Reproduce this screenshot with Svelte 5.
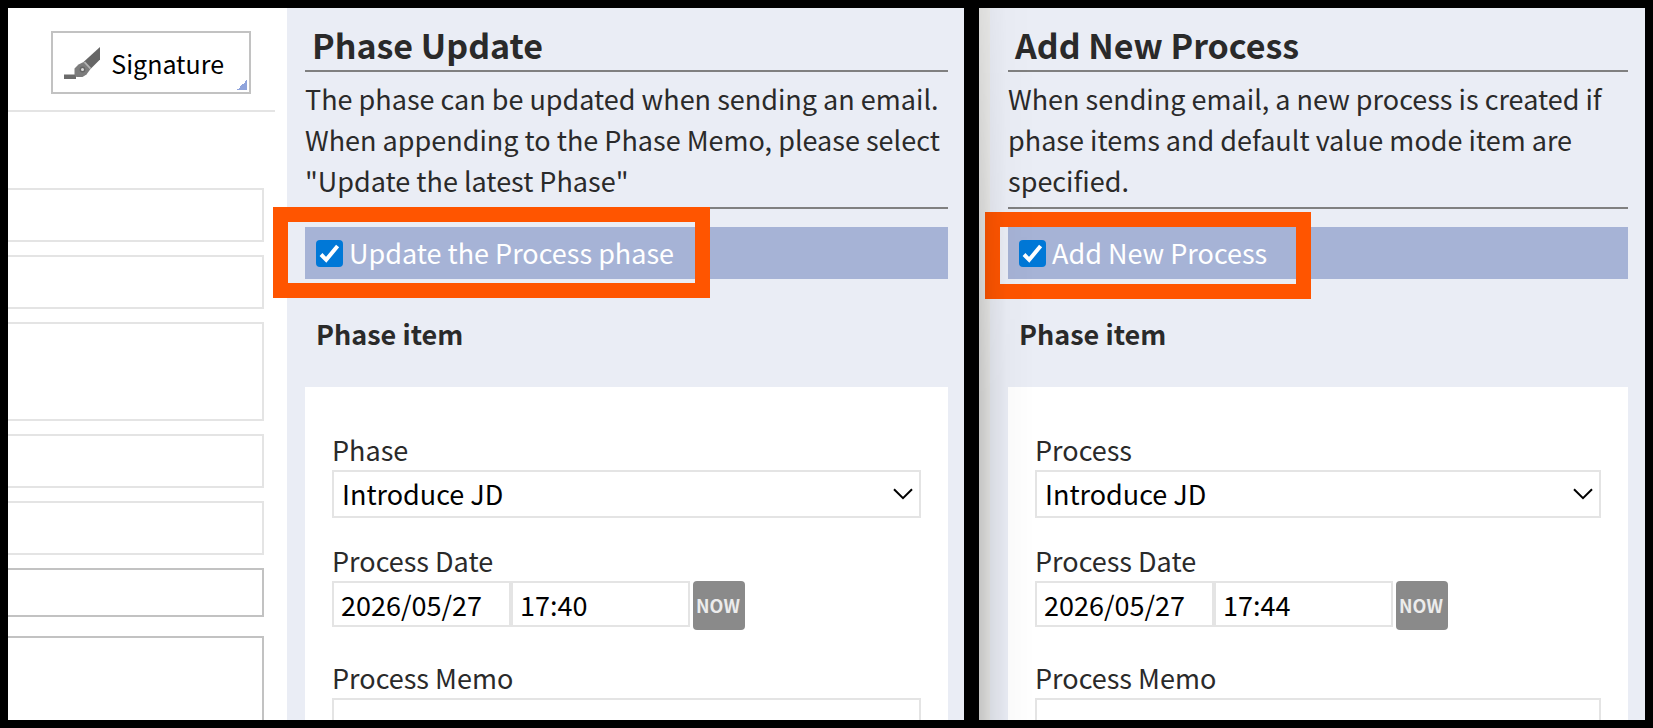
<script>
  const composeFields = ['To', 'Cc', 'Bcc', 'Reply to', 'Sender'];

  const panels = [
    {
      id: 'update',
      title: 'Phase Update',
      text: 'The phase can be updated when sending an email. When appending to the Phase Memo, please select "Update the latest Phase"',
      toggle: 'Update the Process phase',
      selectLabel: 'Phase',
      time: '17:40'
    },
    {
      id: 'create',
      title: 'Add New Process',
      text: 'When sending email, a new process is created if phase items and default value mode item are specified.',
      toggle: 'Add New Process',
      selectLabel: 'Process',
      time: '17:44'
    }
  ];
</script>

{#snippet sidebar(p)}
  <section class="sidebar">
    <h2>{p.title}</h2>
    <p class="intro">{p.text}</p>
    <div class="bar">
      <label class="toggle">
        <span class="check">
          <input type="checkbox" checked />
          <svg viewBox="0 0 27 27" aria-hidden="true"><path d="M5 14.5l5.2 5.3L21.6 6" fill="none" stroke="#fff" stroke-width="4" /></svg>
        </span>
        {p.toggle}
      </label>
      <span class="highlight {p.id}"></span>
    </div>
    <h3>Phase item</h3>
    <div class="card">
      <div class="field">
        <label for="{p.id}-phase">{p.selectLabel}</label>
        <div class="select">
          <select id="{p.id}-phase"><option>Introduce JD</option></select>
          <svg viewBox="0 0 20 12" aria-hidden="true"><path d="M1 1.2l9 9 9-9" fill="none" stroke="#000" stroke-width="2" /></svg>
        </div>
      </div>
      <div class="field date">
        <label for="{p.id}-date">Process Date</label>
        <div class="row">
          <input id="{p.id}-date" type="text" value="2026/05/27" />
          <input type="text" aria-label="Process time" value={p.time} />
          <button type="button" class="now">NOW</button>
        </div>
      </div>
      <div class="field memo">
        <label for="{p.id}-memo">Process Memo</label>
        <textarea id="{p.id}-memo"></textarea>
      </div>
    </div>
  </section>
{/snippet}

<main>
  <div class="frame wide">
    <section class="compose">
      <div class="tools">
        <button type="button" class="signature">
          <svg viewBox="0 0 36 32" aria-hidden="true">
            <path d="M0 27.5h12v4.5H0z" fill="#6b6b6b" />
            <path d="M36 0v12.500L26.500 22 19.500 15z" fill="#666" />
            <path d="M19.500 15l7 7-4 5.500-4 2.500h-6l-2-2v-6.500l4-4z" fill="#7c7c7c" />
            <path d="M20.500 15l6 6.500" stroke="#b4b4b4" stroke-width="1.800" />
            <circle cx="18.500" cy="22.500" r="2.200" fill="#dcdcdc" stroke="#666" stroke-width="1.400" />
          </svg>
          Signature
        </button>
      </div>
      <div class="inputs">
        {#each composeFields as name, i}
          <input type="text" aria-label={name} class:tall={i === 2} />
        {/each}
        <input type="text" aria-label="Subject" class="subject" />
        <textarea aria-label="Message" class="message"></textarea>
      </div>
    </section>
    {@render sidebar(panels[0])}
  </div>
  <div class="frame narrow">
    <div class="edge"></div>
    {@render sidebar(panels[1])}
  </div>
</main>

<style>
  :global(body) {
    margin: 0;
    background: #000;
  }
  main,
  main :global(*) {
    box-sizing: border-box;
  }
  main {
    display: flex;
    gap: 15px;
    height: 100vh;
    padding: 8px;
    background: #000;
    color: #2a2a2a;
    font: 27px/40px "Noto Sans CJK JP", "Noto Sans", sans-serif;
  }
  .frame {
    position: relative;
    display: flex;
    overflow: hidden;
    background: #fff;
  }
  .wide {
    flex: 956 1 0;
  }
  .narrow {
    flex: 666 1 0;
  }
  .narrow::after {
    content: "";
    position: absolute;
    inset: 0 auto 0 0;
    width: 56px;
    pointer-events: none;
    background: linear-gradient(to right, rgba(0, 0, 0, 0.16), rgba(0, 0, 0, 0.08) 20%, rgba(0, 0, 0, 0.02) 50%, transparent);
    mask-image: linear-gradient(rgba(0, 0, 0, 0.4), #000 55%);
  }
  .edge {
    width: 11px;
    background: #ebebea;
  }
  input,
  textarea,
  select,
  button {
    margin: 0;
    border: 2px solid #e4e4e4;
    border-radius: 0;
    background: #fff;
    color: #000;
    font: inherit;
    appearance: none;
    outline: none;
  }
  textarea {
    display: block;
    resize: none;
  }

  .compose {
    flex: none;
    width: 279px;
    display: flex;
    flex-direction: column;
  }
  .tools {
    display: flex;
    justify-content: flex-end;
    margin-right: 12px;
    padding: 23px 24px 16px;
    border-bottom: 2px solid #e4e4e4;
  }
  .signature {
    position: relative;
    display: flex;
    align-items: center;
    gap: 11px;
    height: 63px;
    padding: 0 25px 0 11px;
    border-color: #c2c2c2;
    font-size: 25px;
  }
  .signature svg {
    width: 36px;
    height: 32px;
  }
  .signature::after {
    content: "";
    position: absolute;
    right: 2px;
    bottom: 2px;
    width: 10px;
    height: 10px;
    background: linear-gradient(135deg, transparent 50%, #8fa4dc 50%);
  }
  .inputs {
    flex: 1;
    display: flex;
    flex-direction: column;
    gap: 13px;
    margin: 76px 23px 0 0;
  }
  .inputs > * {
    flex: none;
    width: 100%;
    height: 54px;
    border-left: 0;
  }
  .inputs .tall {
    height: 99px;
  }
  .inputs .subject {
    height: 49px;
    border-color: #c2c2c2;
  }
  .inputs .message {
    flex: 1;
    margin-top: 6px;
    border-color: #c2c2c2;
    border-bottom: 0;
  }

  .sidebar {
    flex: 1;
    display: flex;
    flex-direction: column;
    min-width: 0;
    padding: 14px 16px 0 18px;
    background: #eaedf5;
  }
  .narrow .sidebar {
    padding-right: 17px;
  }
  h2 {
    margin: 0;
    padding: 0 7px 2px;
    border-bottom: 2px solid #808080;
    font-size: 34px;
    line-height: 46px;
    font-weight: 700;
  }
  .intro {
    margin: 0;
    padding: 6px 0;
    border-bottom: 2px solid #808080;
    line-height: 41px;
  }
  .bar {
    position: relative;
    margin-top: 18px;
    padding: 0 11px;
    background: #a6b3d6;
    color: #fff;
  }
  .toggle {
    display: flex;
    align-items: center;
    gap: 6px;
    height: 52px;
  }
  .check {
    position: relative;
    width: 27px;
    height: 27px;
  }
  .check input {
    display: block;
    width: 27px;
    height: 27px;
    border: 0;
    border-radius: 4px;
    background: #0078d7;
  }
  .check svg {
    position: absolute;
    inset: 0;
    pointer-events: none;
  }
  .highlight {
    position: absolute;
    border: 15px solid #ff5500;
    pointer-events: none;
  }
  .highlight.update {
    left: -32px;
    top: -20px;
    width: 437px;
    height: 91px;
  }
  .highlight.create {
    left: -23px;
    top: -15px;
    width: 326px;
    height: 87px;
  }
  h3 {
    margin: 34px 0 33px;
    padding: 0 11px;
    font-size: 27px;
    line-height: 41px;
    font-weight: 700;
  }
  .card {
    flex: 1;
    padding: 44px 27px 0;
    background: #fff;
  }
  .field > label {
    display: block;
    padding-bottom: 1px;
    line-height: 38px;
  }
  .date {
    margin-top: 24px;
  }
  .memo {
    margin-top: 29px;
  }
  .select {
    position: relative;
  }
  select {
    display: block;
    width: 100%;
    height: 48px;
    padding: 0 8px;
  }
  .select svg {
    position: absolute;
    right: 8px;
    top: 18px;
    width: 20px;
    height: 12px;
    pointer-events: none;
  }
  .row {
    display: flex;
  }
  .row input {
    width: 179px;
    height: 46px;
    padding: 0 7px;
  }
  .now {
    width: 52px;
    height: 49px;
    margin-left: 3px;
    padding: 0 2px 0 0;
    border: 0;
    border-radius: 4px;
    background: #8a8a8a;
    color: #ececec;
    font: 700 18px/49px "Noto Sans CJK JP", sans-serif;
  }
  .memo textarea {
    width: 100%;
    height: 120px;
  }
</style>
